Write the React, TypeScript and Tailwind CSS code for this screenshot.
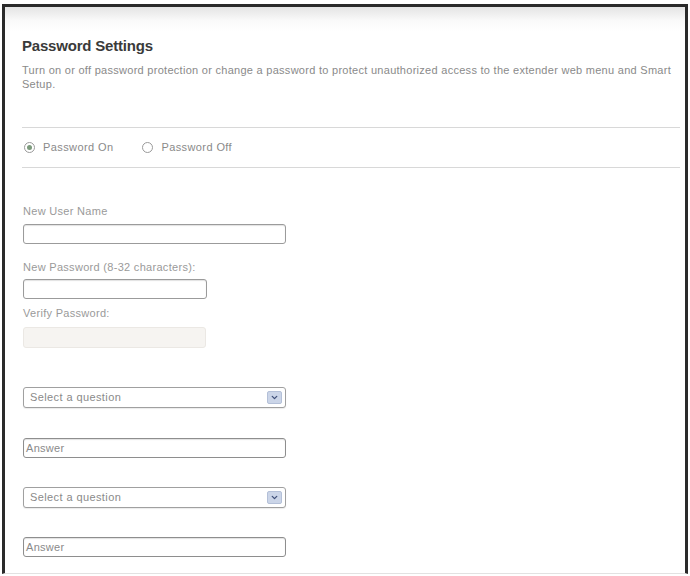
import { ChevronDown } from 'lucide-react';

// ── Small pieces ──────────────────────────────────────────────

function Radio({ checked, label }: { checked?: boolean; label: string }) {
  return (
    <label className="flex items-center gap-[8px] text-[11px] tracking-[0.4px] text-[#8a8a8a]">
      <span className="w-[11px] h-[11px] rounded-full border border-[#9a9a9a] flex items-center justify-center bg-white">
        {checked && <span className="w-[5px] h-[5px] rounded-full bg-[#7c9a7c]" />}
      </span>
      {label}
    </label>
  );
}

function Label({ children, className = '' }: { children: string; className?: string }) {
  return <div className={`text-[11px] tracking-[0.3px] text-[#9a9a9a] leading-[12px] ${className}`}>{children}</div>;
}

function Question({ className = '' }: { className?: string }) {
  return (
    <div className={`w-[263px] h-[21px] rounded-[3px] border border-[#a0a0a0] bg-white flex items-center justify-between pl-[6px] pr-[3px] text-[11px] tracking-[0.4px] text-[#8a8a8a] shadow-[0_1px_1px_rgba(0,0,0,0.08)] ${className}`}>
      <span>Select a question</span>
      <span className="w-[15px] h-[13px] rounded-[2px] bg-[#cbd5e8] border border-[#b4c0d8] flex items-center justify-center">
        <ChevronDown size={9} strokeWidth={3.5} className="text-[#3f4f78]" />
      </span>
    </div>
  );
}

function Answer({ className = '' }: { className?: string }) {
  return (
    <div className={`w-[263px] h-[20px] rounded-[3px] border border-[#8e8e8e] bg-white flex items-center pl-[2px] text-[11px] tracking-[0.3px] text-[#8a8a8a] shadow-[inset_0_1px_1px_rgba(0,0,0,0.12)] ${className}`}>
      Answer
    </div>
  );
}

// ── Page ──────────────────────────────────────────────────────

export default function App() {
  return (
    <div className="w-[690px] h-[576px] bg-white pt-[4px] pl-[2px] pr-[2px] font-['Liberation_Sans',Arial,sans-serif]">
      <div className="h-[570px] border-t-[3px] border-l-[3px] border-r-[3px] border-[#2a2a2a] border-b border-b-[#e2e2e2] bg-[linear-gradient(to_bottom,#e4e4e4_0px,#fafafa_14px,#ffffff_24px)]">
        <div className="pl-[17px] pr-[5px] pt-[30px]">
          <h1 className="text-[15px] font-bold text-[#3a3a3a] leading-[18px] tracking-[-0.2px]">Password Settings</h1>

          <p className="mt-[8px] text-[11px] tracking-[0.28px] leading-[14px] text-[#8a8a8a]">
            Turn on or off password protection or change a password to protect unauthorized access to the extender web menu and Smart Setup.
          </p>

          <div className="mt-[36px] border-t border-[#d8d8d8]" />
          <div className="flex items-center gap-[29px] h-[39px] pl-[2px]">
            <Radio checked label="Password On" />
            <Radio label="Password Off" />
          </div>
          <div className="border-t border-[#d8d8d8]" />

          <div className="pl-[1px]">
            <Label className="mt-[37px] mb-[7px]">New User Name</Label>
            <div className="w-[263px] h-[20px] rounded-[3px] border border-[#9b9b9b] bg-white shadow-[inset_0_1px_1px_rgba(0,0,0,0.12)]" />

            <Label className="mt-[17px] mb-[6px]">New Password (8-32 characters):</Label>
            <div className="w-[184px] h-[20px] rounded-[3px] border border-[#9b9b9b] bg-white shadow-[inset_0_1px_1px_rgba(0,0,0,0.12)]" />

            <Label className="mt-[8px] mb-[8px]">Verify Password:</Label>
            <div className="w-[183px] h-[21px] rounded-[3px] border border-[#ebe8e4] bg-[#f6f4f1]" />

            <Question className="mt-[39px]" />
            <Answer className="mt-[30px]" />
            <Question className="mt-[29px]" />
            <Answer className="mt-[29px]" />
          </div>
        </div>
      </div>
    </div>
  );
}
